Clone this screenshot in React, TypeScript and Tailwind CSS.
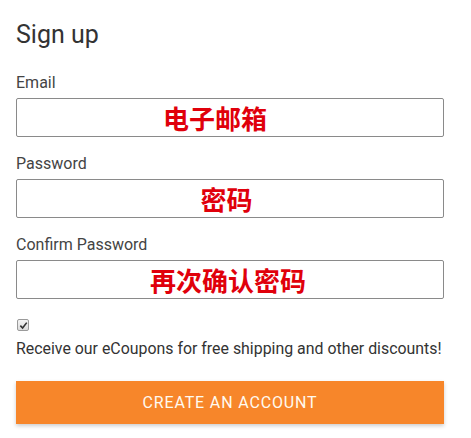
import React, { useState } from "react";

const Field = ({ label, hint, shift }: { label: string; hint: string; shift: string }) => (
	<div className="flex flex-col">
		<label className="text-[16px] leading-[20px] text-[#444] mb-[5px]">{label}</label>
		<div className="h-[39px] border border-[#8a8a8a] rounded-[2px] flex items-center justify-center">
			<span
				className={`text-[26px] font-bold text-[#e0000b] leading-none ${shift}`}
				style={{ fontFamily: '"Noto Sans CJK SC", sans-serif' }}
			>
				{hint}
			</span>
		</div>
	</div>
);

const App: React.FC = () => {
	const [checked, setChecked] = useState(true);
	return (
		<div
			className="w-[471px] h-[438px] bg-white px-[16px] pt-[20px]"
			style={{ fontFamily: "Roboto, sans-serif" }}
		>
			<div className="w-[428px] flex flex-col">
				<h1 className="text-[25px] leading-[30px] text-[#333] mb-[23px]">Sign up</h1>
				<div className="flex flex-col gap-[17px]">
					<Field label="Email" hint="电子邮箱" shift="mr-[30px]" />
					<Field label="Password" hint="密码" shift="mr-[7px]" />
					<Field label="Confirm Password" hint="再次确认密码" shift="mr-[4px]" />
				</div>
				<button
					type="button"
					onClick={() => setChecked(!checked)}
					className="w-[12px] h-[12px] mt-[20px] ml-[1px] border border-[#9a9a9a] rounded-[2px] bg-gradient-to-b from-[#f4f4f4] to-[#dcdcdc] flex items-center justify-center"
				>
					{checked && (
						<svg viewBox="0 0 10 10" className="w-[9px] h-[9px]">
							<path d="M1.5 5.2 L4 7.8 L8.6 1.8" fill="none" stroke="#333" strokeWidth="1.8" />
						</svg>
					)}
				</button>
				<p className="text-[15.9px] leading-[20px] text-[#333] mt-[8px] whitespace-nowrap">
					Receive our eCoupons for free shipping and other discounts!
				</p>
				<button className="mt-[22px] h-[43px] bg-[#f7862a] text-[#fffaf0] text-[16px] tracking-[0.85px] shadow-[0_2px_4px_rgba(0,0,0,0.2)]">
					CREATE AN ACCOUNT
				</button>
			</div>
		</div>
	);
};

export default App;
